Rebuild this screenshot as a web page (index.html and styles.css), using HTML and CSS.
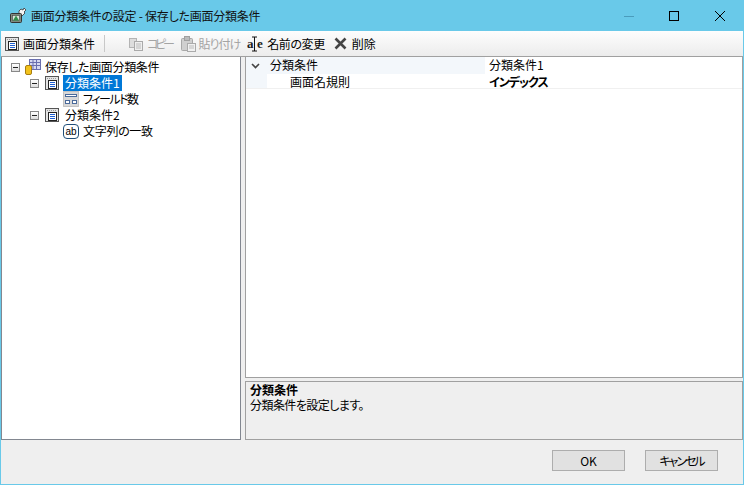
FILE: index.html
```html
<!DOCTYPE html>
<html lang="ja">
<head>
<meta charset="utf-8">
<title>画面分類条件の設定</title>
<link rel="stylesheet" href="styles.css">
</head>
<body>
<div class="window">
  <header class="titlebar">
    <svg class="app-icon" width="18" height="18" viewBox="0 0 18 18"><path d="M10 4l2-2 2 1 1-2 2 2-2 2 1 1-3 3-3-2z" fill="#f4f4f4" stroke="#333" stroke-width=".8"/><rect x="1.500" y="6.500" width="11" height="9" rx="1" fill="#7f8a80" stroke="#333"/><rect x="3.500" y="8.500" width="7" height="5" fill="#d9e6dc" stroke="#444" stroke-width=".6"/><path d="M7 8.500l3 5H4z" fill="#2f8f4a"/></svg>
    <span class="title-text">画面分類条件の設定 - 保存した画面分類条件</span>
    <div class="win-controls">
      <svg class="win-btn" width="46" height="30" viewBox="0 0 46 30"><rect x="18" y="15" width="10" height="1" fill="#4a9cbc"/></svg>
      <svg class="win-btn" width="46" height="30" viewBox="0 0 46 30"><rect x="17.500" y="10.500" width="9" height="9" fill="none" stroke="#000"/></svg>
      <svg class="win-btn" width="46" height="30" viewBox="0 0 46 30"><path d="M17 10l10 10M27 10L17 20" stroke="#000" fill="none"/></svg>
    </div>
  </header>
  <div class="toolbar">
    <div class="tool">
      <svg class="tool-icon" width="16" height="16" viewBox="0 0 16 16"><rect x="1.500" y="1.500" width="13" height="13" fill="#e4e4e4" stroke="#555"/><path d="M3 3.500h10" stroke="#999" stroke-dasharray="1 1"/><rect x="4.500" y="5.500" width="8" height="8" fill="#fff" stroke="#222"/><path d="M6 7.500h5M6 9.500h5M6 11.500h5" stroke="#1f5fd0"/></svg>
      <span>画面分類条件</span>
    </div>
    <div class="sep"></div>
    <div class="tool disabled tool-copy">
      <svg class="tool-icon" width="16" height="16" viewBox="0 0 16 16"><rect x="1.500" y="2.500" width="7" height="9" fill="#ddd" stroke="#b4b4b4"/><rect x="6.500" y="5.500" width="8" height="9" fill="#efefef" stroke="#aaa"/><path d="M8 8h5M8 10h5M8 12h5" stroke="#bbb"/></svg>
      <span class="copy-text">コピー</span>
    </div>
    <div class="tool disabled tool-paste">
      <svg class="tool-icon" width="16" height="16" viewBox="0 0 16 16"><rect x="1.500" y="2.500" width="11" height="12" rx="1" fill="#cfcfcf" stroke="#a8a8a8"/><rect x="4.500" y="0.500" width="5" height="4" fill="#bbb" stroke="#a0a0a0"/><rect x="7.500" y="7.500" width="8" height="8" fill="#f0f0f0" stroke="#aaa"/><path d="M9 10h5M9 12h5" stroke="#bbb"/></svg>
      <span class="paste-text">貼り付け</span>
    </div>
    <div class="tool tool-rename">
      <svg class="tool-icon" width="16" height="16" viewBox="0 0 16 16"><text x="0" y="12" class="rename-a">a</text><text x="10" y="12" class="rename-a">e</text><path d="M5 1h5M5 15h5M7.500 1v14" stroke="#111" fill="none"/></svg>
      <span class="rename-text">名前の変更</span>
    </div>
    <div class="tool tool-delete">
      <svg class="tool-icon" width="16" height="16" viewBox="0 0 16 16"><path d="M2.500 2.500l10 10M12.500 2.500l-10 10" stroke="#444" stroke-width="2.600" fill="none"/></svg>
      <span>削除</span>
    </div>
  </div>
  <main class="content">
    <section class="tree">
      <div class="tree-row depth0">
        <span class="exp"></span>
        <svg class="node-icon" width="16" height="16" viewBox="0 0 16 16"><rect x="4.500" y="0.500" width="11" height="10" fill="#d6d9f0" stroke="#6a6fae"/><path d="M4 3.500h11M4 6.500h11M8 1v9M11.500 1v9" stroke="#6a6fae"/><rect x="0.500" y="6.500" width="6" height="9" rx="1.500" fill="#f2c21c" stroke="#a87e10"/></svg>
        <span class="label root-label">保存した画面分類条件</span>
      </div>
      <div class="tree-row depth1">
        <span class="exp"></span>
        <svg class="node-icon" width="16" height="16" viewBox="0 0 16 16"><rect x="1.500" y="1.500" width="13" height="13" fill="#e4e4e4" stroke="#555"/><path d="M3 3.500h10" stroke="#999" stroke-dasharray="1 1"/><rect x="4.500" y="5.500" width="8" height="8" fill="#fff" stroke="#222"/><path d="M6 7.500h5M6 9.500h5M6 11.500h5" stroke="#1f5fd0"/></svg>
        <span class="label selected">分類条件1</span>
      </div>
      <div class="tree-row depth2">
        <svg class="node-icon" width="16" height="16" viewBox="0 0 16 16"><rect x="0.500" y="0.500" width="15" height="15" fill="#d8d8d8" stroke="#999" stroke-dasharray="1 1"/><rect x="2.500" y="3.500" width="11" height="2" fill="#fff" stroke="#4a6a9a"/><rect x="2.500" y="9.500" width="4" height="3" fill="#fff" stroke="#4a6a9a"/><rect x="9.500" y="9.500" width="4" height="3" fill="#fff" stroke="#4a6a9a"/></svg>
        <span class="label field-label">フィールド数</span>
      </div>
      <div class="tree-row depth1">
        <span class="exp"></span>
        <svg class="node-icon" width="16" height="16" viewBox="0 0 16 16"><rect x="1.500" y="1.500" width="13" height="13" fill="#e4e4e4" stroke="#555"/><path d="M3 3.500h10" stroke="#999" stroke-dasharray="1 1"/><rect x="4.500" y="5.500" width="8" height="8" fill="#fff" stroke="#222"/><path d="M6 7.500h5M6 9.500h5M6 11.500h5" stroke="#1f5fd0"/></svg>
        <span class="label">分類条件2</span>
      </div>
      <div class="tree-row depth2">
        <span class="ab-icon">ab</span>
        <span class="label match-label">文字列の一致</span>
      </div>
    </section>
    <div class="right">
      <section class="grid">
        <div class="grid-row grid-head">
          <span class="gutter"><svg width="9" height="6" viewBox="0 0 9 6"><path d="M1 1l3.500 3.500L8 1" stroke="#444" stroke-width="1.600" fill="none"/></svg></span>
          <span class="prop">分類条件</span>
          <span class="val">分類条件1</span>
        </div>
        <div class="grid-row grid-sub">
          <span class="gutter"></span>
          <span class="prop prop-indent">画面名規則</span>
          <span class="val val-bold">インデックス</span>
        </div>
      </section>
      <section class="desc">
        <div class="desc-title">分類条件</div>
        <div class="desc-text">分類条件を設定します。</div>
      </section>
    </div>
  </main>
  <footer class="footer">
    <button class="btn">OK</button>
    <button class="btn btn-cancel">キャンセル</button>
  </footer>
</div>
</body>
</html>
```
FILE: styles.css
```css
* { box-sizing: border-box; }
html, body { margin: 0; height: 100%; }
body {
  font-family: "Noto Sans CJK JP", "Liberation Sans", sans-serif;
  font-size: 12px;
  font-feature-settings: "palt";
  color: #000;
  overflow: hidden;
}
.window {
  width: 744px;
  height: 485px;
  display: flex;
  flex-direction: column;
  background: #efefef;
  border: 1px solid #69c9e9;
  border-top: 0;
}
.titlebar {
  height: 31px;
  margin: 0 -1px;
  background: #69c9e9;
  display: flex;
  align-items: center;
  padding-left: 9px;
  flex: none;
}
.app-icon { flex: none; }
.title-text { margin-left: 4px; font-size: 12px; color: #111; letter-spacing: -0.25px; }
.win-controls { margin-left: auto; display: flex; }
.win-btn { display: block; }
.toolbar {
  height: 26px;
  flex: none;
  display: flex;
  align-items: center;
  padding-left: 3px;
  background: linear-gradient(#fdfdfd, #ececec);
  border-bottom: 1px solid #a0a0a0;
}
.tool { display: flex; align-items: center; gap: 3px; }
.tool-icon { flex: none; }
.disabled { color: #a4a4a4; }
.sep { width: 1px; height: 17px; background: #c8c8c8; margin: 0 23px 0 9px; }
.copy-text { letter-spacing: -3.300px; }
.paste-text { letter-spacing: -1px; }
.rename-text { letter-spacing: -0.400px; }
.tool-copy { margin-right: 8px; }
.tool-paste { margin-right: 7px; }
.tool-rename { margin-right: 8px; gap: 4px; }
.rename-a { font: 700 13px "Liberation Serif", serif; fill: #222; }
.content {
  flex: none;
  height: 383px;
  display: flex;
  gap: 4px;
}
.tree {
  width: 240px;
  background: #fff;
  border: 1px solid #828790;
  border-top: 0;
  padding-top: 1px;
}
.tree-row { display: flex; align-items: center; height: 16px; line-height: 16px; }
.depth0 { padding-left: 9px; margin-top: 1px; }
.depth1 { padding-left: 28px; }
.depth2 { padding-left: 61px; }
.node-icon { flex: none; }
.exp {
  width: 9px; height: 9px;
  border: 1px solid #888;
  background: linear-gradient(#fff, #ddd);
  position: relative;
  margin-right: 5px;
  flex: none;
}
.exp::after { content: ""; position: absolute; left: 1px; right: 1px; top: 3px; height: 1px; background: #222; }
.label { margin-left: 3px; padding: 0 2px; white-space: nowrap; }
.root-label { margin-left: 2px; letter-spacing: -0.350px; }
.depth2 .label { margin-left: 2px; }
.field-label { letter-spacing: -1.500px; }
.match-label { letter-spacing: -0.300px; }
.selected { background: #0078d7; color: #fff; }
.ab-icon {
  width: 16px; height: 15px;
  border: 1px solid #1f4e79;
  border-radius: 4px;
  font: 10px/13px "Liberation Sans", sans-serif;
  text-align: center;
  background: #fff;
  flex: none;
}
.right { flex: 1; display: flex; flex-direction: column; gap: 3px; min-width: 0; }
.grid {
  height: 321px;
  background: #fff;
  border: 1px solid #a0a0a0;
  border-top: 0;
}
.grid-row { display: flex; }
.grid-head { height: 17px; line-height: 16px; background: #f3f7fb; }
.grid-sub { height: 15px; line-height: 15px; border-bottom: 1px solid #f0f0f0; }
.gutter { width: 21px; flex: none; background: #f3f7fb; display: flex; align-items: center; justify-content: center; padding-right: 3px; }
.prop { width: 222px; flex: none; padding-left: 3px; }
.prop-indent { padding-left: 23px; }
.val { flex: 1; }
.grid-head .val { background: #fff; padding-left: 4px; margin-left: -4px; }
.val-bold { font-weight: 700; letter-spacing: -1px; }
.desc {
  flex: 1;
  background: #efefef;
  border: 1px solid #a0a0a0;
  padding: 0 4px;
  line-height: 15px;
}
.desc-title { font-weight: 700; }
.desc-text { letter-spacing: -0.550px; }
.footer {
  flex: 1;
  display: flex;
  justify-content: flex-end;
  gap: 20px;
  padding: 10px 25px 0 0;
}
.btn {
  width: 73px;
  height: 21px;
  font: 12px "Noto Sans CJK JP", sans-serif;
  font-feature-settings: "palt";
  background: #e1e1e1;
  border: 1px solid #adadad;
  padding: 0;
  color: #000;
}
.btn-cancel { letter-spacing: -2px; }
```
